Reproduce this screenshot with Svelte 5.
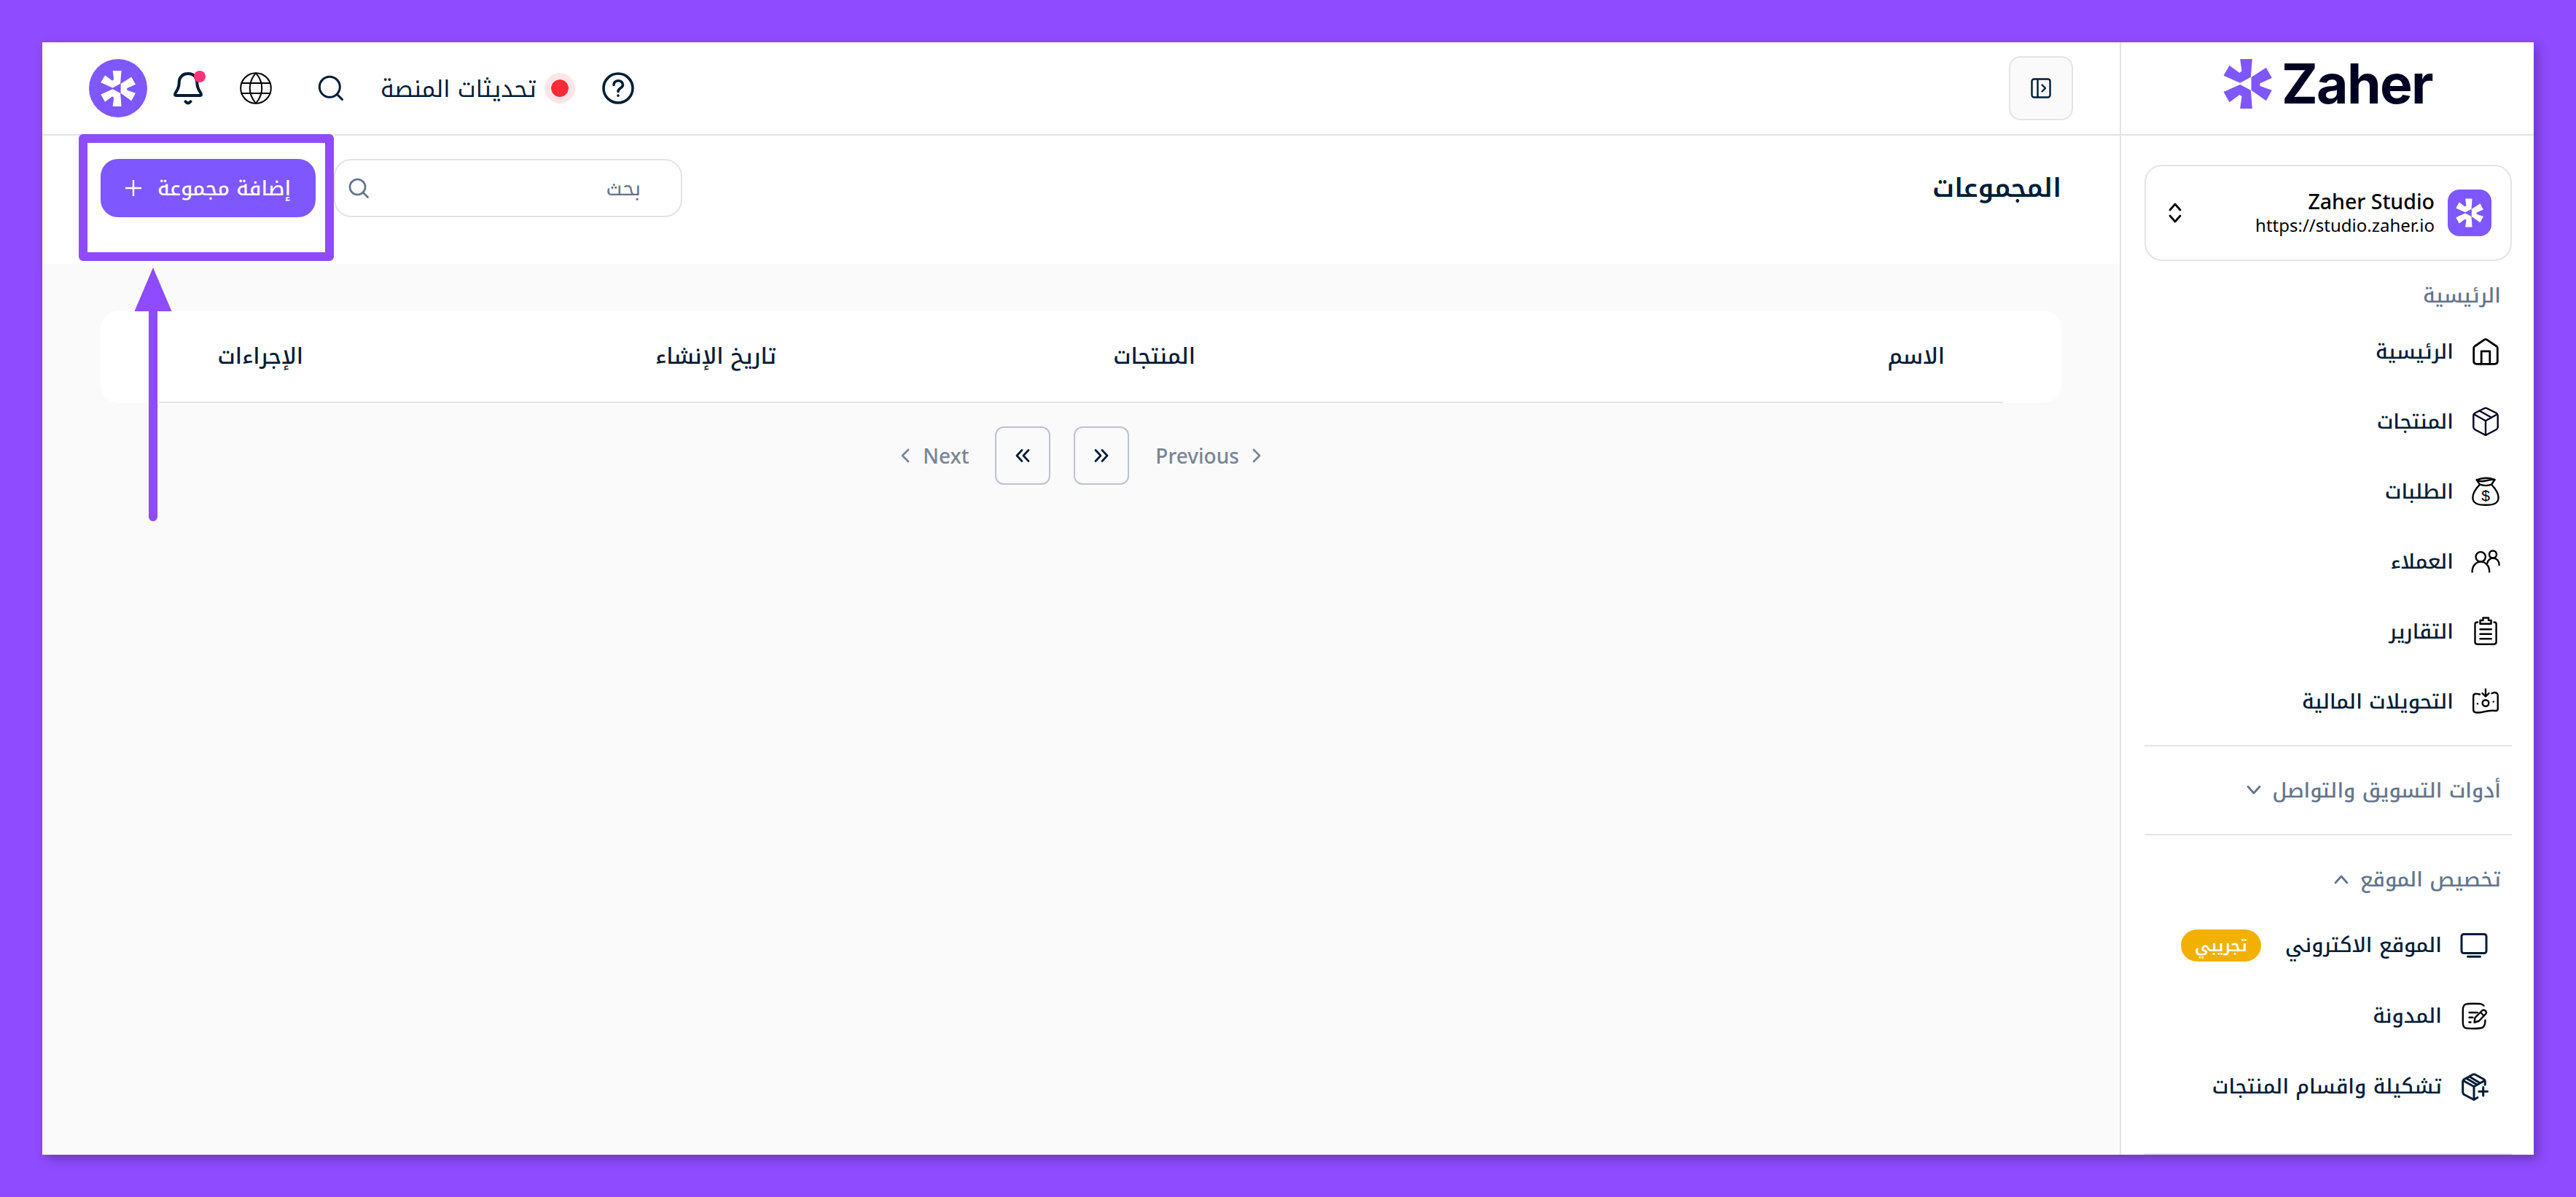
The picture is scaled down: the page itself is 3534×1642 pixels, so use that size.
<script lang="ts">
    const mainLinks = [
        { label: "الرئيسية", icon: "home" },
        { label: "المنتجات", icon: "box" },
        { label: "الطلبات", icon: "bag" },
        { label: "العملاء", icon: "users" },
        { label: "التقارير", icon: "clipboard" },
        { label: "التحويلات المالية", icon: "money" },
    ];

    const siteLinks = [
        { label: "الموقع الاكتروني", icon: "screen", badge: "تجريبي" },
        { label: "المدونة", icon: "blog" },
        { label: "تشكيلة واقسام المنتجات", icon: "boxPlus" },
    ];

    const columns = ["الاسم", "المنتجات", "تاريخ الإنشاء", "الإجراءات"];
</script>

{#snippet mark()}
    <svg class="mark" viewBox="60 33 200 204" fill="currentColor">
        <path d="M129 33h50l-6 74-44 24-68-30 24-42 42 31 9-8z" />
        <path d="M129 237h50l-6-76-44-23-68 30 24 43 42-31 9 7z" />
        <path d="M175 108l61-40 24 43-49 22v11l49 17-24 44-61-44z" />
    </svg>
{/snippet}

{#snippet icon(name)}
    <svg class="icon {name}" viewBox="0 0 40 40">
        {#if name === "home"}
            <path d="M3.7 15.5Q3.7 14 5 13L18.5 3.8Q20 2.8 21.5 3.8L35 13Q36.3 14 36.3 15.5V33.5Q36.3 37.3 32.5 37.3H7.5Q3.7 37.3 3.7 33.5Z" />
            <path d="M14.2 37V19.8H25.8V37" />
        {:else if name === "box"}
            <path d="M18 2.2Q20 1 22 2.2L34.5 8.5Q36.7 9.8 36.7 12V28Q36.7 30 34.7 31.2L20 39 5.3 31.2Q3.3 30 3.3 28V12Q3.3 9.8 5.5 8.5Z" />
            <path d="M4 10.2 20 19.3 36 10.2M20 19.3V38.5M11.5 5.5 28 14.8" />
        {:else if name === "bag"}
            <path d="M7.8 4.3Q20-.8 32.4 4L28.2 10.7Q20 13.5 12 10.7Z" />
            <path d="M7.8 4.3Q12 7.5 20 5.5T32.4 4" />
            <path d="M12 10.7C6 17 2.4 22.5 2.4 28.5 2.4 36 8 38.8 20 38.8S37.6 36 37.6 28.5C37.6 22.5 34 17 28.2 10.7" />
            <text x="20" y="33" text-anchor="middle">$</text>
        {:else if name === "users"}
            <circle cx="13.2" cy="13.8" r="6.7" />
            <path d="M1.6 34.5C1.6 16 25.2 16 25.2 34.5" />
            <circle cx="30" cy="10.5" r="5" />
            <path d="M22.3 22.5C24.5 12.5 38.6 13.5 38.6 25" />
        {:else if name === "clipboard"}
            <path d="M9 7.5Q5.5 7.5 5.5 10V34.5Q5.5 37.7 8.5 37.7H31.5Q34.6 37.7 34.6 34.5V10Q34.6 7.5 31.5 7.5" />
            <path d="M16.5 1.5H24V5H27.6V9.8H12.5V5H16.5Z" />
            <path d="M12.5 17.2H27.8M12.5 23.8H27.8M12.5 30.2H27.8" />
        {:else if name === "money"}
            <path d="M12 10.5C8 9.5 3.2 8.5 3.2 13V31.5Q3.2 34.5 6 35.2C17 37 18 31.5 34 33Q36.7 33 36.7 30.5V12Q36.7 8 32.5 8 30.5 8 28.5 9.2" />
            <path d="M20 3.5V13M15.5 9 20 13.5 24.5 9M8.9 23.3V23.4M30.7 20.5V20.6" />
            <circle cx="20" cy="22.5" r="4.3" />
        {:else if name === "screen"}
            <rect x="3" y="4.5" width="34" height="26" rx="3" />
            <path d="M11.5 35.3H28.5" />
        {:else if name === "blog"}
            <path d="M33.5 5.5C31 2.8 29 2.8 20 2.8 8 2.8 4.8 3 4.8 12V28C4.8 36.5 7 37 20 37 31 37 35.5 36.5 35.5 25.5" />
            <path d="M13.5 15H25M13.5 21.7H18.5M13.5 28.3H15.5" />
            <path d="M20.5 28.5 21.5 22 31 12.5Q33.5 10.5 35.8 12.7T36 17L27 26.5ZM29 14.5 33.5 19.5" />
        {:else if name === "boxPlus"}
            <path d="M35.3 17V12.5Q35.3 10.8 33.5 9.5L22 3.2Q20 2.2 18 3.2L6.5 9.5Q4.7 10.8 4.7 12.5V27Q4.7 29 6.5 30.5L20 37.5 25 34.5" />
            <path d="M5.5 11.5 20 19.5 34.5 11.5M20 19.5V37M14 6 28 14.5M10 8.5 24 16.8M32.7 20.5V32M26.8 26.3H38.5" />
        {/if}
    </svg>
{/snippet}

<div class="window" dir="rtl">
    <aside>
        <div class="brand" dir="ltr">
            {@render mark()}
            <span>Zaher</span>
        </div>
        <nav>
            <div class="store">
                <div class="storeLogo">{@render mark()}</div>
                <div class="storeText">
                    <strong>Zaher Studio</strong>
                    <span dir="ltr">https://studio.zaher.io</span>
                </div>
                <svg class="sort" viewBox="0 0 20 28"><path d="M3 10l7-8 7 8M3 18l7 8 7-8" /></svg>
            </div>

            <h4>الرئيسية</h4>
            {#each mainLinks as link}
                <div class="link">
                    {@render icon(link.icon)}
                    <span>{link.label}</span>
                </div>
            {/each}

            <hr class="first">
            <div class="group">
                <span>أدوات التسويق والتواصل</span>
                <svg viewBox="0 0 20 14"><path d="M2 2l8 9 8-9" /></svg>
            </div>
            <hr>
            <div class="group open">
                <span>تخصيص الموقع</span>
                <svg viewBox="0 0 20 14"><path d="M2 12l8-9 8 9" /></svg>
            </div>
            {#each siteLinks as link}
                <div class="link sub">
                    {@render icon(link.icon)}
                    <span>{link.label}</span>
                    {#if link.badge}
                        <em>{link.badge}</em>
                    {/if}
                </div>
            {/each}
            <hr class="last">
        </nav>
    </aside>

    <main>
        <header>
            <button class="toggle" aria-label="sidebar">
                <svg viewBox="0 0 28 28">
                    <rect x="1.5" y="1.5" width="25" height="25" rx="3" />
                    <path d="M9.5 2V26M15.5 9.5 20 14 15.5 18.5" />
                </svg>
            </button>
            <div class="tools" dir="ltr">
                <div class="avatar">{@render mark()}</div>
                <svg class="tool bell" viewBox="0 0 48 48">
                    <path d="M24 4C16 4 11.7 9.5 11.7 16 11.7 27 6 29 6 32.5Q6 34 8 34H40Q42 34 42 32.5C42 29 36.3 27 36.3 16 36.3 9.5 32 4 24 4Z" />
                    <path d="M20.5 42.3Q24 46.5 27.5 42.3" />
                    <circle cx="40" cy="8" r="8" />
                </svg>
                <svg class="tool globe" viewBox="0 0 48 48">
                    <circle cx="24" cy="24" r="20.8" />
                    <path d="M24 3.2C13 16 13 32 24 44.8 35 32 35 16 24 3.2ZM4.5 16.9H43.5M4.5 31.1H43.5" />
                </svg>
                <svg class="tool find" viewBox="0 0 48 48">
                    <circle cx="22.3" cy="22.3" r="14" />
                    <path d="M32.5 32.5 39.5 39.5" />
                </svg>
                <span class="updates" dir="rtl">تحديثات المنصة</span>
                <i class="live"></i>
                <svg class="tool help" viewBox="0 0 48 48">
                    <circle cx="24" cy="24" r="20" />
                    <path d="M18 19.5C18 11.5 30.5 12 30.5 19.5 30.5 24 24 23.5 24 28.5M24 34V34.2" />
                </svg>
            </div>
        </header>

        <section class="toolbar">
            <h1>المجموعات</h1>
            <div class="actions">
                <div class="search">
                    <span>بحث</span>
                    <svg viewBox="0 0 28 28"><circle cx="12.5" cy="12.5" r="10.5" /><path d="M20 20l6.5 6.5" /></svg>
                </div>
                <button class="add">
                    <span>إضافة مجموعة</span>
                    <svg viewBox="0 0 22 22"><path d="M11 0V22M0 11H22" /></svg>
                </button>
            </div>
        </section>

        <section class="content">
            <div class="table">
                <div class="row">
                    {#each columns as column}
                        <span>{column}</span>
                    {/each}
                </div>
            </div>
            <div class="pager">
                <span class="step">
                    <svg viewBox="0 0 12 20"><path d="M2 2l8 8-8 8" /></svg>
                    Previous
                </span>
                <button aria-label="first"><svg viewBox="0 0 20 18"><path d="M2 1.5 9 9 2 16.5M11 1.5 18 9 11 16.5" /></svg></button>
                <button aria-label="last"><svg viewBox="0 0 20 18"><path d="M9 1.5 2 9 9 16.5M18 1.5 11 9 18 16.5" /></svg></button>
                <span class="step">
                    Next
                    <svg viewBox="0 0 12 20"><path d="M10 2l-8 8 8 8" /></svg>
                </span>
            </div>
        </section>
    </main>

    <!-- callout over the add button -->
    <div class="frame"></div>
    <svg class="arrow" viewBox="0 0 52 350">
        <path d="M26 0 51.5 60H.5Z" />
        <path class="shaft" d="M26 55V342" />
    </svg>
</div>

<style>
    :global(body) {
        margin: 0;
        background: #8f4bff;
    }
    .window {
        position: relative;
        display: flex;
        box-sizing: border-box;
        width: 3418px;
        height: 1526px;
        margin: 58px;
        background: #fff;
        box-shadow: 6px 6px 14px rgba(0, 0, 0, 0.25);
        color: #001c37;
        font-family: "Noto Sans", "Noto Kufi Arabic", sans-serif;
        font-size: 28px;
        word-spacing: 2px;
    }
    svg {
        display: block;
        flex: none;
        fill: none;
        stroke: currentColor;
        stroke-width: 2.7;
        stroke-linecap: round;
        stroke-linejoin: round;
    }
    button {
        display: flex;
        align-items: center;
        justify-content: center;
        box-sizing: border-box;
        padding: 0;
        font: inherit;
        color: inherit;
        word-spacing: inherit;
    }
    .mark {
        fill: currentColor;
        stroke: none;
    }

    /* sidebar */
    aside {
        box-sizing: border-box;
        width: 568px;
        border-left: 2px solid #e4e4e4;
        overflow: hidden;
    }
    .brand {
        display: flex;
        align-items: flex-start;
        gap: 13px;
        box-sizing: border-box;
        height: 128px;
        padding: 23px 0 0 140px;
        border-bottom: 2px solid #e4e4e4;
        color: #7e57ff;
        .mark {
            width: 67px;
            height: 68px;
        }
        span {
            color: #000022;
            font: 700 75px/67px Inter, sans-serif;
            letter-spacing: -1.7px;
        }
    }
    nav {
        display: flex;
        flex-direction: column;
        padding: 40px 30px 0 32px;
    }
    .store {
        display: flex;
        align-items: center;
        box-sizing: border-box;
        height: 132px;
        padding: 0 26px 0 30px;
        border: 2px solid #e4e4e4;
        border-radius: 24px;
        color: #000;
        word-spacing: 0;
    }
    .storeLogo {
        display: grid;
        place-items: center;
        width: 60px;
        height: 64px;
        border-radius: 16px;
        background: #7e57ff;
        color: #fff;
        .mark {
            width: 38px;
            height: 40px;
        }
    }
    .storeText {
        display: flex;
        flex: 1;
        flex-direction: column;
        margin-right: 18px;
        strong {
            font-size: 28.5px;
            font-weight: 500;
            line-height: 34px;
        }
        span {
            align-self: flex-start;
            font-size: 24px;
            line-height: 32px;
        }
    }
    .sort {
        width: 20px;
        height: 28px;
    }
    h4 {
        margin: 23px 15px 7px 0;
        color: #64748b;
        font-size: 28px;
        font-weight: 500;
        line-height: 46px;
    }
    .link {
        display: flex;
        align-items: center;
        height: 96px;
        padding-right: 16px;
        font-weight: 500;
        span {
            margin-right: 24px;
        }
    }
    .icon {
        width: 40px;
        height: 40px;
        color: #000;
        stroke-width: 2.4;
        text {
            font: 21px "Liberation Sans", sans-serif;
            fill: #000;
            stroke: none;
        }
    }
    .home {
        stroke-width: 2.8;
    }
    .box {
        color: #000022;
    }
    .screen, .boxPlus {
        color: #001c37;
        stroke-width: 3;
    }
    .sub {
        height: 97px;
        padding-right: 32px;
        em {
            height: 44px;
            margin-right: 33px;
            padding: 0 19px;
            border-radius: 22px;
            background: #f2b100;
            color: #fff;
            font-size: 22.5px;
            font-style: normal;
            font-weight: 600;
            line-height: 44px;
        }
    }
    hr {
        width: 100%;
        height: 2px;
        margin: 0;
        border: 0;
        background: #e4e4e4;
    }
    .first {
        margin-top: 12px;
    }
    .last {
        margin-top: 43px;
    }
    .group {
        display: flex;
        align-items: center;
        gap: 16px;
        box-sizing: border-box;
        height: 120px;
        padding-right: 15px;
        color: #64748b;
        font-weight: 500;
        svg {
            width: 20px;
            height: 14px;
        }
    }
    .open {
        height: 102px;
        padding-top: 18px;
    }

    /* header */
    main {
        display: flex;
        flex: 1;
        flex-direction: column;
    }
    header {
        display: flex;
        align-items: center;
        justify-content: space-between;
        box-sizing: border-box;
        height: 128px;
        padding: 0 64px;
        border-bottom: 2px solid #e4e4e4;
    }
    .toggle {
        width: 88px;
        height: 88px;
        border: 2px solid #e4e4e4;
        border-radius: 16px;
        background: #fafafa;
        svg {
            width: 28px;
            height: 28px;
            stroke-width: 2.4;
        }
    }
    .tools {
        display: flex;
        align-items: center;
    }
    .avatar {
        display: grid;
        place-items: center;
        width: 80px;
        height: 80px;
        border-radius: 50%;
        background: #7e57ff;
        color: #fff;
        .mark {
            width: 48px;
            height: 49px;
        }
    }
    .tool {
        width: 48px;
        height: 48px;
    }
    .bell {
        margin-left: 32px;
        stroke-width: 4;
        overflow: visible;
        circle {
            fill: #ff3377;
            stroke: none;
        }
    }
    .globe {
        margin-left: 45px;
        color: #000;
        stroke-width: 2;
    }
    .find {
        margin-left: 55px;
        stroke-width: 3;
    }
    .updates {
        margin-left: 44px;
        font-size: 32px;
        line-height: 46px;
    }
    .live {
        width: 24px;
        height: 24px;
        margin-left: 11px;
        border: 9px solid #ffe5e7;
        border-radius: 50%;
        background: #ff2a35;
        background-clip: padding-box;
    }
    .help {
        margin-left: 35px;
        stroke-width: 3.6;
    }

    /* page */
    .toolbar {
        display: flex;
        align-items: flex-start;
        justify-content: space-between;
        box-sizing: border-box;
        height: 176px;
        padding: 32px 80px 0;
    }
    h1 {
        margin: 0;
        font-size: 36px;
        font-weight: 600;
        line-height: 78px;
    }
    .actions {
        display: flex;
        gap: 25px;
    }
    .search {
        display: flex;
        align-items: center;
        justify-content: space-between;
        box-sizing: border-box;
        width: 478px;
        height: 80px;
        padding: 0 55px 0 18px;
        border: 2px solid #e4e4e4;
        border-radius: 24px;
        color: #64748b;
        svg {
            width: 28px;
            height: 28px;
        }
    }
    .add {
        gap: 22px;
        width: 295px;
        height: 80px;
        border: 0;
        border-radius: 24px;
        background: #7e57ff;
        color: #fff;
        font-weight: 500;
        svg {
            width: 22px;
            height: 22px;
            stroke-width: 2.5;
        }
    }
    .content {
        flex: 1;
        padding: 64px 80px 0;
        background: #fafafa;
    }
    .table {
        height: 127px;
        padding: 0 80px;
        border-radius: 26px;
        background: #fff;
    }
    .row {
        display: grid;
        grid-template-columns: 1028px 575px 649px 1fr;
        align-items: center;
        box-sizing: border-box;
        height: 127px;
        padding-right: 80px;
        border-bottom: 2px solid #e4e4e4;
        font-size: 30px;
        font-weight: 500;
    }
    .pager {
        display: flex;
        align-items: center;
        justify-content: center;
        gap: 32px;
        margin-top: 32px;
        button {
            width: 76px;
            height: 80px;
            border: 2px solid #b9c3d1;
            border-radius: 12px;
            background: none;
            svg {
                width: 20px;
                height: 18px;
            }
        }
    }
    .step {
        display: flex;
        align-items: center;
        gap: 18px;
        padding: 0 4px;
        color: #7a8593;
        font-weight: 500;
        svg {
            width: 12px;
            height: 20px;
        }
    }

    .frame {
        position: absolute;
        top: 126px;
        left: 50px;
        box-sizing: border-box;
        width: 350px;
        height: 174px;
        border: 12px solid #8f4bff;
        border-radius: 6px;
    }
    .arrow {
        position: absolute;
        top: 309px;
        left: 126px;
        width: 52px;
        height: 350px;
        color: #8f4bff;
        fill: currentColor;
        stroke: none;
        .shaft {
            stroke: currentColor;
            stroke-width: 12;
        }
    }
</style>
